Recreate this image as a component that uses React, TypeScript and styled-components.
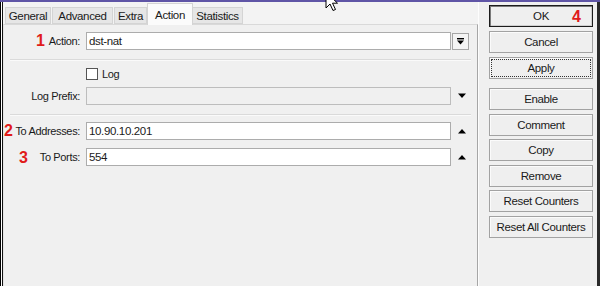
import React from "react";
import styled, { createGlobalStyle } from "styled-components";

const Global = createGlobalStyle`
  html, body { margin: 0; padding: 0; background: #f0f0f0; }
  * { box-sizing: border-box; }
`;

const Window = styled.div`
  position: relative;
  width: 600px;
  height: 286px;
  display: flex;
  flex-direction: column;
  background: #f0f0f0;
  font-family: "Liberation Sans", Arial, sans-serif;
  font-size: 11px;
  letter-spacing: -0.35px;
  color: #1a1a1a;
  overflow: hidden;
`;

const TitleEdge = styled.div`
  height: 2px;
  background: #5f55a6;
  flex: none;
`;

const Body = styled.div`
  flex: 1;
  display: flex;
  padding-left: 3px;
  border-right: 3px solid #2a2a2a;
  box-shadow: inset 1px 0 0 #000, inset 2px 0 0 #fff, inset 3px 0 0 #111;
`;

const LeftPane = styled.div`
  width: 475px;
  display: flex;
  flex-direction: column;
`;

const TabStrip = styled.div`
  height: 22px;
  display: flex;
  align-items: flex-end;
  padding-left: 2px;
  background: #f3f3f3;
`;

const Tab = styled.div<{ $active?: boolean; $w: number }>`
  width: ${(p) => p.$w}px;
  height: ${(p) => (p.$active ? "22px" : "17px")};
  margin: ${(p) => (p.$active ? "0 -1px -1px -1px" : "0 1px 0 0")};
  display: flex;
  align-items: center;
  justify-content: center;
  background: ${(p) => (p.$active ? "#fbfbfb" : "#e6e6e6")};
  border: 1px solid #d4d4d4;
  border-bottom: ${(p) => (p.$active ? "none" : "1px solid #d4d4d4")};
  position: relative;
  z-index: ${(p) => (p.$active ? 2 : 1)};
  font-size: 11.5px;
`;

const TabPanel = styled.div`
  flex: 1;
  display: flex;
  flex-direction: column;
  border-top: 1px solid #d9d9d9;
  border-left: 1px solid #e4e4e4;
  border-right: 1px solid #a6a6a6;
  background: #f0f0f0;
`;

const Row = styled.div<{ $mt: number }>`
  position: relative;
  display: flex;
  align-items: center;
  height: 18px;
  margin-top: ${(p) => p.$mt}px;
`;

const Label = styled.div`
  width: 76px;
  text-align: right;
  white-space: nowrap;
  margin-right: 6px;
`;

const Field = styled.div<{ $disabled?: boolean }>`
  width: 365px;
  height: 18px;
  display: flex;
  align-items: center;
  padding-left: 2px;
  background: ${(p) => (p.$disabled ? "#f0f0f0" : "#ffffff")};
  border: 1px solid ${(p) => (p.$disabled ? "#bdbdbd" : "#acacac")};
  font-size: 11.5px;
`;

const Trail = styled.div<{ $start?: boolean }>`
  width: 22px;
  height: 18px;
  display: flex;
  align-items: center;
  justify-content: ${(p) => (p.$start ? "flex-start" : "center")};
`;

const DropButton = styled.div`
  width: 17px;
  height: 17px;
  margin-left: 1px;
  display: flex;
  align-items: center;
  justify-content: center;
  background: #f4f4f4;
  border: 1px solid #a6a6a6;
`;

const Separator = styled.div<{ $mt: number }>`
  height: 2px;
  margin: ${(p) => p.$mt}px 6px 0 6px;
  border-top: 1px solid #dadada;
  border-bottom: 1px solid #fafafa;
`;

const CheckRow = styled.div<{ $mt: number }>`
  display: flex;
  align-items: center;
  height: 13px;
  margin-top: ${(p) => p.$mt}px;
  padding-left: 82px;
`;

const CheckBox = styled.div`
  width: 12px;
  height: 12px;
  background: #fff;
  border: 1px solid #555;
  margin-right: 4px;
`;

const Mark = styled.span<{ $left: number; $top: number }>`
  position: absolute;
  left: ${(p) => p.$left}px;
  top: ${(p) => p.$top}px;
  font-family: "Liberation Sans", Arial, sans-serif;
  font-weight: bold;
  font-size: 16px;
  letter-spacing: 0;
  color: #e01b1b;
  line-height: 1;
`;

const RightPane = styled.div`
  flex: 1;
  display: flex;
  flex-direction: column;
  padding: 3px 0 0 10px;
  border-left: 1px solid #fdfdfd;
`;

const ButtonGroup = styled.div<{ $gap: number; $mt: number }>`
  display: flex;
  flex-direction: column;
  gap: ${(p) => p.$gap}px;
  margin-top: ${(p) => p.$mt}px;
`;

const Button = styled.div<{ $kind?: "default" | "focus" }>`
  position: relative;
  width: 104px;
  height: 22px;
  display: flex;
  align-items: center;
  justify-content: center;
  background: #efefef;
  font-size: 11.5px;
  border: 1px solid
    ${(p) => (p.$kind === "default" ? "#1c1c1c" : "#a2a2a2")};
  box-shadow: ${(p) =>
    p.$kind === "default"
      ? "inset 1px 1px 0 #7a7a7a, inset -1px -1px 0 #cfcfcf"
      : "inset 1px 1px 0 #fbfbfb"};
  outline: ${(p) => (p.$kind === "focus" ? "1px dotted #333" : "none")};
  outline-offset: -3px;
`;

const Cursor = styled.svg`
  position: absolute;
  left: 325px;
  top: -9px;
`;

const DropIcon = () => (
  <svg width="9" height="9" viewBox="0 0 9 9">
    <rect x="1" y="1" width="7" height="1.4" fill="#000" />
    <path d="M1 3.5 H8 L4.5 7.5 Z" fill="#000" />
  </svg>
);

const Triangle = ({ up }: { up?: boolean }) => (
  <svg width="10" height="6" viewBox="0 0 10 6">
    <path d={up ? "M1 5.5 H9 L5 1 Z" : "M1 0.5 H9 L5 5 Z"} fill="#000" />
  </svg>
);

const tabs: { name: string; w: number }[] = [
  { name: "General", w: 46 },
  { name: "Advanced", w: 61 },
  { name: "Extra", w: 33 },
  { name: "Action", w: 46 },
  { name: "Statistics", w: 51 },
];

export default function App() {
  return (
    <Window>
      <Global />
      <TitleEdge />
      <Body>
        <LeftPane>
          <TabStrip>
            {tabs.map((t) => (
              <Tab key={t.name} $w={t.w} $active={t.name === "Action"}>
                {t.name}
              </Tab>
            ))}
          </TabStrip>
          <TabPanel>
            <Row $mt={7}>
              <Mark $left={32} $top={1}>1</Mark>
              <Label>Action:</Label>
              <Field>dst-nat</Field>
              <Trail $start>
                <DropButton>
                  <DropIcon />
                </DropButton>
              </Trail>
            </Row>
            <Separator $mt={9} />
            <CheckRow $mt={6}>
              <CheckBox />
              <span>Log</span>
            </CheckRow>
            <Row $mt={7}>
              <Label>Log Prefix:</Label>
              <Field $disabled />
              <Trail>
                <Triangle />
              </Trail>
            </Row>
            <Separator $mt={9} />
            <Row $mt={6}>
              <Mark $left={0} $top={1}>2</Mark>
              <Label>To Addresses:</Label>
              <Field>10.90.10.201</Field>
              <Trail>
                <Triangle up />
              </Trail>
            </Row>
            <Row $mt={8}>
              <Mark $left={15} $top={2}>3</Mark>
              <Label>To Ports:</Label>
              <Field>554</Field>
              <Trail>
                <Triangle up />
              </Trail>
            </Row>
          </TabPanel>
        </LeftPane>
        <RightPane>
          <ButtonGroup $gap={4} $mt={0}>
            <Button $kind="default">
              OK
              <Mark $left={82} $top={3}>4</Mark>
            </Button>
            <Button>Cancel</Button>
            <Button $kind="focus">Apply</Button>
          </ButtonGroup>
          <ButtonGroup $gap={3.6} $mt={9}>
            <Button>Enable</Button>
            <Button>Comment</Button>
            <Button>Copy</Button>
            <Button>Remove</Button>
            <Button>Reset Counters</Button>
            <Button>Reset All Counters</Button>
          </ButtonGroup>
        </RightPane>
      </Body>
      <Cursor width="14" height="21" viewBox="0 0 14 21">
        <path
          d="M1 1 V17 L5 13 L8 19.5 L10.5 18.5 L7.5 12.2 H12.5 Z"
          fill="#fff"
          stroke="#000"
          strokeWidth="1"
          strokeLinejoin="miter"
        />
      </Cursor>
    </Window>
  );
}
